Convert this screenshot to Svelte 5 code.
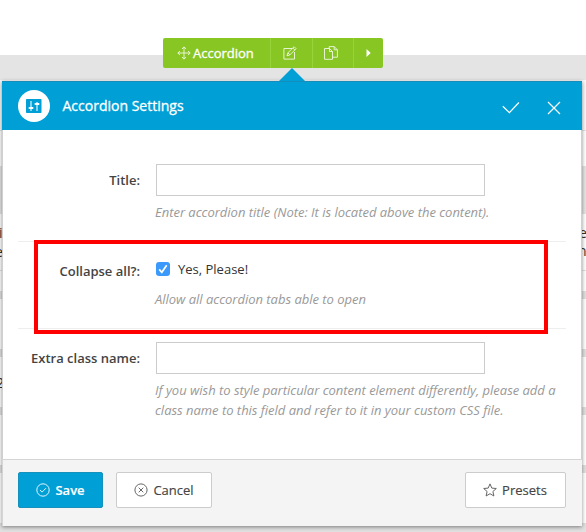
<script>
  const bands = [
    { h: 55, c: '#ffffff' },
    { h: 25, c: '#e4e4e4' },
    { h: 50, c: '#f7f7f7' },
    { h: 1, c: '#e5e5e5' },
    { h: 35, c: '#ffffff' },
    { h: 48, c: '#e4e4e4' },
    { h: 56, c: '#ffffff' },
    { h: 1, c: '#e2e2e2' },
    { h: 20, c: '#ffffff' },
    { h: 8, c: '#e0e0e0' },
    { h: 50, c: '#ffffff' },
    { h: 8, c: '#e0e0e0' },
    { h: 50, c: '#ffffff' },
    { h: 8, c: '#e0e0e0' },
    { h: 50, c: '#ffffff' },
    { h: 8, c: '#e0e0e0' },
    { h: 50, c: '#ffffff' },
    { h: 9, c: '#e0e0e0' }
  ];
  let title = $state('');
  let extra = $state('');
</script>

<div class="page">
  {#each bands as b}
    <div style="height:{b.h}px;background:{b.c}"></div>
  {/each}
  <span class="peek" style="left:-1px;top:223px">i</span>
  <span class="peek" style="left:-5px;top:242px">e</span>
  <span class="peek" style="left:-4px;top:373px">2</span>
  <span class="peek" style="left:579px;top:223px">e</span>
  <span class="peek" style="left:578px;top:241px">n</span>

  <div class="toolbar">
    <div class="name">
      <svg width="14" height="14" viewBox="0 0 14 14"><path d="M7 1v12M1 7h12M5 3l2-2.2L9 3M5 11l2 2.2L9 11M3 5L.8 7 3 9M11 5l2.2 2L11 9" /></svg>
      <span>Accordion</span>
    </div>
    <div class="tool edit">
      <svg width="14" height="14" viewBox="0 0 14 14"><path d="M9 2.5H.9v10.6h10.6V6M4 9.8l.9-3 6.2-6.1 2 2-6.2 6.2zM4.9 6.8l2 2.1M9.8 2l2 2" /></svg>
    </div>
    <div class="tool copy">
      <svg width="15" height="14" viewBox="0 0 15 14"><path d="M5.5 2.5h-5v10.8h8V5.5l-3-3v3h3M5.2 2.5V.6h5l3.2 3.2v7.4H8.5M10.2.6v3.2h3.2" /></svg>
    </div>
    <div class="tool arrow">
      <svg width="5" height="8" viewBox="0 0 5 8"><path class="solid" d="M.5 0L4.7 4 .5 8z" /></svg>
    </div>
  </div>

  <section class="modal">
    <header>
      <div class="badge">
        <svg width="16" height="14" viewBox="0 0 16 14"><rect width="15.5" height="14" rx=".8" fill="#00a0d6" /><path d="M5 2v10M11 3v9" stroke="#a6def2" stroke-width="1.6" /><path d="M2.7 9h4.6M8.7 5h4.6" stroke="#fff" stroke-width="2" /></svg>
      </div>
      <h1>Accordion Settings</h1>
      <svg class="check" width="18" height="13" viewBox="0 0 18 13"><path d="M.8 5.3l6.6 6.4L16.9 1.5" /></svg>
      <svg class="close" width="14" height="14" viewBox="0 0 14 14"><path d="M1 1l12 12M13 1L1 13" /></svg>
    </header>

    <div class="body">
      <div class="row first">
        <label for="title">Title:</label>
        <div class="field">
          <input id="title" type="text" bind:value={title} />
          <p>Enter accordion title (Note: It is located above the content).</p>
        </div>
      </div>
      <div class="row second">
        <label for="collapse">Collapse all?:</label>
        <div class="field">
          <div class="option">
            <button id="collapse" class="box" role="checkbox" aria-checked="true" aria-label="Collapse all">
              <svg width="14" height="14" viewBox="0 0 14 14"><path d="M3.2 7.4l2.6 2.9 4.9-7" /></svg>
            </button>
            <span>Yes, Please!</span>
          </div>
          <p>Allow all accordion tabs able to open</p>
        </div>
      </div>
      <div class="row third">
        <label for="extra">Extra class name:</label>
        <div class="field">
          <input id="extra" type="text" bind:value={extra} />
          <p>If you wish to style particular content element differently, please add a<br />class name to this field and refer to it in your custom CSS file.</p>
        </div>
      </div>
    </div>

    <footer>
      <button class="btn save">
        <svg width="14" height="14" viewBox="0 0 14 14"><circle cx="7" cy="7" r="6.2" /><path d="M4 7.1l2.1 2 3.9-4" /></svg>
        <span>Save</span>
      </button>
      <button class="btn cancel">
        <svg width="14" height="14" viewBox="0 0 14 14"><circle cx="7" cy="7" r="6.1" /><path d="M4.7 4.7l4.6 4.6M9.3 4.7L4.7 9.3" /></svg>
        <span>Cancel</span>
      </button>
      <button class="btn presets">
        <svg width="14" height="14" viewBox="0 0 14 14"><path d="M7 .9l1.8 4.2 4.5.4-3.4 3 1 4.5L7 10.7 3.1 13l1-4.5-3.4-3 4.5-.4z" /></svg>
        <span>Presets</span>
      </button>
    </footer>
  </section>
  <div class="pointer"></div>
  <div class="highlight"></div>
</div>

<style>
  .page {
    position: relative;
    width: 586px;
    height: 532px;
    overflow: hidden;
    font: 13px/20px 'Open Sans', sans-serif;
    color: #444;
  }
  svg { display: block; flex: none; fill: none; }
  .peek { position: absolute; font-size: 14px; line-height: 20px; color: #333; }
  .toolbar {
    position: absolute;
    left: 163px;
    top: 38px;
    width: 220px;
    height: 30px;
    display: flex;
    background: #88c623;
    border-radius: 2px;
    color: #fff;
  }
  .toolbar svg { stroke: #f0f8e4; stroke-width: 0.9; }
  .toolbar .solid { fill: #fff; stroke: none; }
  .name {
    width: 107px;
    box-sizing: border-box;
    padding-left: 14px;
    display: flex;
    align-items: center;
    gap: 2px;
  }
  .name span { font-size: 13px; -webkit-text-stroke: 0.3px #fff; }
  .tool {
    display: flex;
    align-items: center;
    justify-content: center;
    border-left: 1px solid #98d33a;
    box-sizing: border-box;
  }
  .edit { width: 42px; padding-right: 4px; }
  .copy { width: 41px; padding-right: 4px; }
  .arrow { flex: 1; padding-right: 1px; }
  .pointer {
    position: absolute;
    left: 279px;
    top: 68px;
    width: 26px;
    height: 13px;
    background: #00a0d6;
    clip-path: polygon(50% 0, 100% 100%, 0 100%);
  }
  .modal {
    position: absolute;
    left: 2px;
    top: 81px;
    width: 580px;
    height: 445px;
    display: flex;
    flex-direction: column;
    background: #fff;
    box-shadow: 0 1px 4px rgba(0, 0, 0, 0.45);
  }
  header {
    height: 49px;
    flex: none;
    box-sizing: border-box;
    padding: 0 20px 0 16px;
    display: flex;
    align-items: center;
    background: #00a0d6;
    border-top: 1px solid #168dbb;
  }
  header > svg { stroke: #fff; stroke-width: 1.2; margin-top: 3px; }
  header .check { margin-left: auto; margin-right: 27px; }
  header .close { margin-right: 1px; }
  .badge {
    width: 32px;
    height: 32px;
    border-radius: 50%;
    background: #fff;
    display: flex;
    align-items: center;
    justify-content: center;
  }
  h1 {
    margin: 0 0 0 12.5px;
    font-size: 14px;
    font-weight: 400;
    color: #fff;
    -webkit-text-stroke: 0.3px #fff;
  }
  .body {
    flex: 1;
    box-sizing: border-box;
    padding: 0 15px;
    border: solid #d0d0d0;
    border-width: 0 1px;
  }
  .row { display: flex; box-sizing: border-box; }
  .first { height: 112px; padding-top: 34px; border-bottom: 1px solid #eee; }
  .second { height: 87px; padding-top: 17px; border-bottom: 1px solid #eee; }
  .third { padding-top: 13px; }
  .row label {
    width: 122px;
    flex: none;
    margin-right: 16px;
    text-align: right;
    font-weight: 600;
    line-height: 32px;
  }
  .second label { line-height: 24px; }
  .field { white-space: nowrap; }
  input {
    display: block;
    width: 329px;
    height: 32px;
    box-sizing: border-box;
    border: 1px solid #ccc;
    background: #fff;
    outline: none;
  }
  p { margin: 6px 0 0 -1px; font-style: italic; color: #999; letter-spacing: -0.018px; }
  .option { height: 20px; display: flex; align-items: center; gap: 8px; color: #333; }
  .second p { margin-top: 10px; }
  .box { width: 14px; height: 14px; padding: 0; border: 0; border-radius: 3px; background: #3b99fc; }
  .box svg { stroke: #fff; stroke-width: 1.7; }
  footer {
    height: 67px;
    flex: none;
    box-sizing: border-box;
    padding: 12px 16px 0 15px;
    display: flex;
    align-items: flex-start;
    background: #f4f4f4;
    border: solid #d5d5d5;
    border-width: 1px 0 0 1px;
  }
  .btn {
    height: 36px;
    box-sizing: border-box;
    padding: 0;
    display: flex;
    align-items: center;
    justify-content: center;
    gap: 5px;
    border: 1px solid #ccc;
    border-radius: 2px;
    background: #fff;
    color: #444;
    font: 13px/20px 'Open Sans', sans-serif;
  }
  .btn svg { stroke: #666; stroke-width: 1; margin-top: -1px; }
  .btn span { -webkit-text-stroke: 0.15px currentColor; }
  .save { width: 85px; background: #00a0d6; border-color: #1691bd; color: #fff; font-weight: 600; }
  .save svg { stroke: #e2f5fb; }
  .cancel { width: 96px; margin-left: 13px; }
  .presets { width: 101px; margin-left: auto; padding-right: 1px; }
  .highlight {
    position: absolute;
    left: 34px;
    top: 240px;
    width: 514px;
    height: 94px;
    box-sizing: border-box;
    border: 4px solid #f00;
  }
</style>
